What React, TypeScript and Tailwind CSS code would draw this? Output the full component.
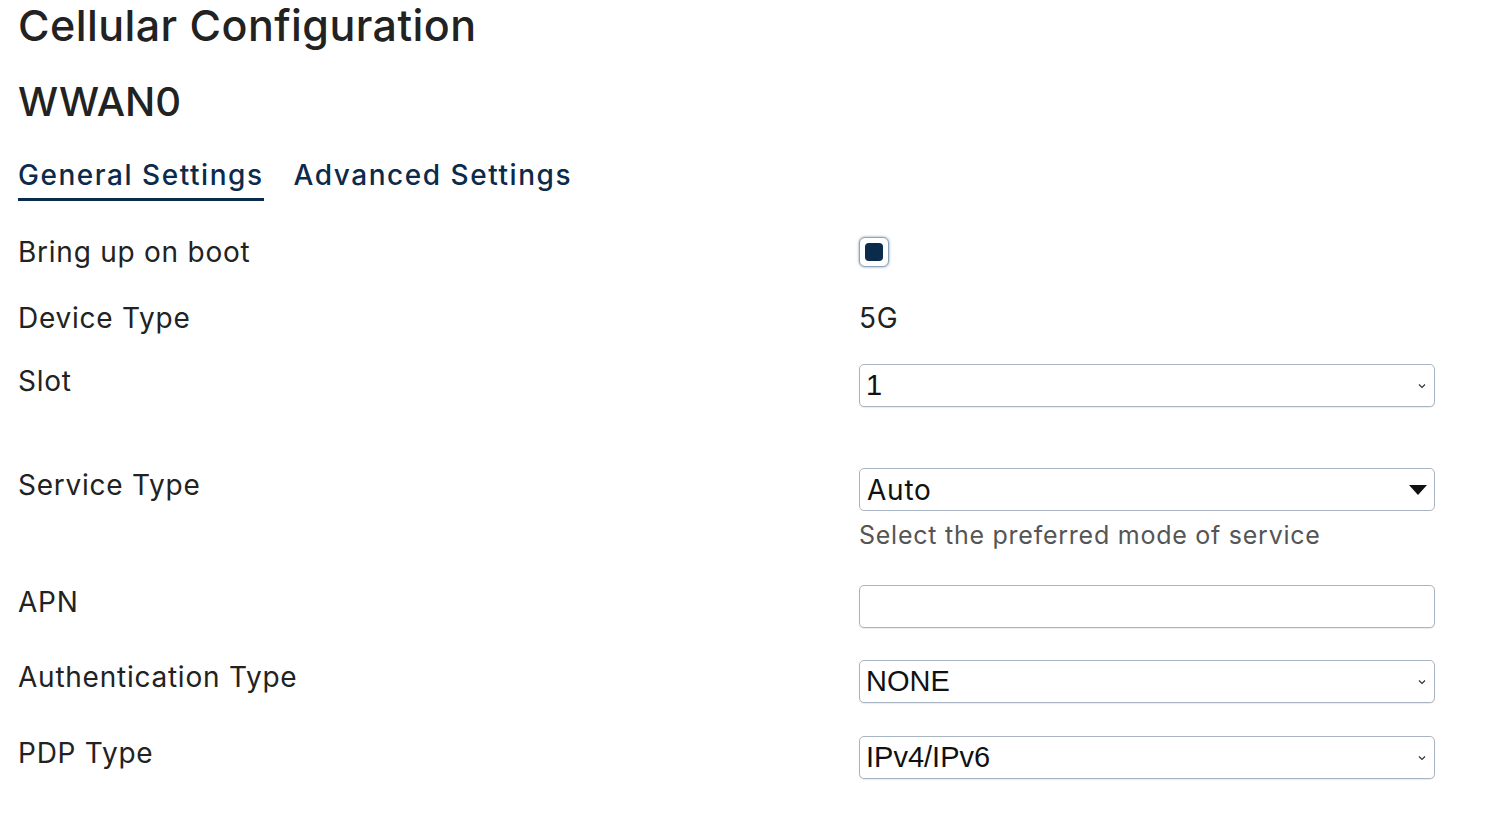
import { useState } from 'react';

const FONT = { fontFamily: 'Inter, "Noto Sans", sans-serif' };
const SYS = { fontFamily: '"Liberation Sans", Arial, sans-serif' };

function Chevron() {
  return (
    <svg width="8" height="6" viewBox="0 0 8 6" className="absolute right-[8px] top-1/2 -translate-y-1/2">
      <path d="M1 1.5 L4 4.5 L7 1.5" fill="none" stroke="#333" strokeWidth="1.2" />
    </svg>
  );
}

function SmallSelect({ value }: { value: string }) {
  return (
    <div className="relative w-[576px] h-[43px] rounded-[5px] border border-[#a9b4c2] bg-white shadow-[0_1px_1px_rgba(0,0,0,0.08)] flex items-center pl-[6px] text-[29px] text-[#111]" style={SYS}>
      {value}
      <Chevron />
    </div>
  );
}

function Row({ label, children, className = '' }: { label: string; children: React.ReactNode; className?: string }) {
  return (
    <div className={`flex ${className}`}>
      <div className="w-[841px] shrink-0 text-[28px] tracking-[0.027em] leading-[34px] text-[#222]">{label}</div>
      <div className="flex-1">{children}</div>
    </div>
  );
}

export default function App() {
  const [tab, setTab] = useState('general');
  return (
    <div className="min-h-screen bg-white pl-[18px]" style={FONT}>
      <h1 className="text-[43px] tracking-[0.01em] leading-[50px] font-medium text-[#222]">Cellular Configuration</h1>
      <h2 className="mt-[27px] text-[40px] leading-[50px] font-medium text-[#222]">WWAN0</h2>

      <div className="mt-[30px] flex gap-[30px] text-[28px] tracking-[0.055em] font-medium text-[#0b2b4c]">
        <button onClick={() => setTab('general')} className={`pb-[5px] leading-[36px] border-b-[3px] ${tab === 'general' ? 'border-[#0b2b4c]' : 'border-transparent'}`}>
          General Settings
        </button>
        <button onClick={() => setTab('advanced')} className={`pb-[5px] leading-[36px] border-b-[3px] ${tab === 'advanced' ? 'border-[#0b2b4c]' : 'border-transparent'}`}>
          Advanced Settings
        </button>
      </div>

      <Row label="Bring up on boot" className="mt-[35px] items-center h-[32px]">
        <div className="w-[30px] h-[30px] rounded-[6px] border border-[#8fa3b8] shadow-[0_0_3px_rgba(60,90,120,0.6)] bg-white flex items-center justify-center">
          <div className="w-[18px] h-[18px] rounded-[4px] bg-[#0b2b4c]" />
        </div>
      </Row>

      <Row label="Device Type" className="mt-[33px] items-center">
        <div className="text-[28px] tracking-[0.027em] leading-[34px] text-[#222]">5G</div>
      </Row>

      <Row label="Slot" className="mt-[29px]">
        <SmallSelect value="1" />
      </Row>

      <Row label="Service Type" className="mt-[61px]">
        <div className="relative w-[576px] h-[43px] rounded-[5px] border border-[#a9b4c2] bg-white flex items-center pl-[7px] text-[28px] tracking-[0.027em] text-[#111]">
          Auto
          <svg width="18" height="10" viewBox="0 0 18 10" className="absolute right-[7px] top-1/2 -translate-y-1/2">
            <path d="M0 0 H18 L9 10 Z" fill="#111" />
          </svg>
        </div>
        <div className="mt-[6px] text-[25px] tracking-[0.03em] leading-[36px] text-[#555]">Select the preferred mode of service</div>
      </Row>

      <Row label="APN" className="mt-[32px]">
        <input className="w-[576px] h-[43px] rounded-[5px] border border-[#a9b4c2] bg-white shadow-[0_1px_1px_rgba(0,0,0,0.08)] outline-none px-[7px] text-[27px]" />
      </Row>

      <Row label="Authentication Type" className="mt-[32px]">
        <SmallSelect value="NONE" />
      </Row>

      <Row label="PDP Type" className="mt-[33px]">
        <SmallSelect value="IPv4/IPv6" />
      </Row>
    </div>
  );
}
